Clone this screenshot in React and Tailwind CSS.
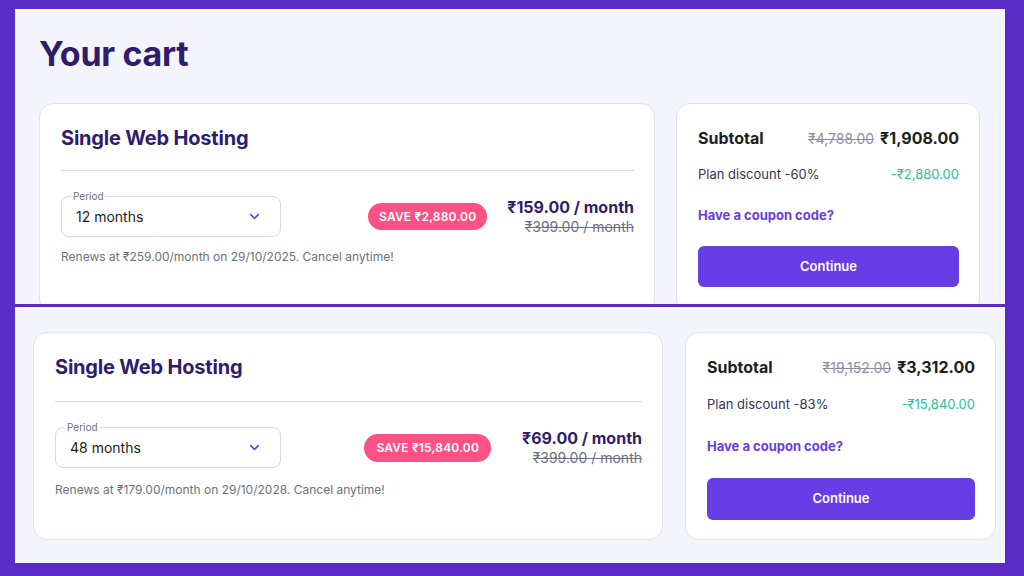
import { ChevronDown } from 'lucide-react';

const font = { fontFamily: 'Inter, "Noto Sans", "DejaVu Sans", sans-serif' };

function PlanCard({ period, renews, save, price, oldPrice, cardClass, selectClass, gapClass, divClass, rowClass, noteClass, badgeClass }) {
  return (
    <div className={`bg-white rounded-[14px] border border-[#e3e3ee] pl-[21px] pr-[20px] pt-[20px] ${cardClass}`}>
      <h2 className="text-[20px] leading-[28px] font-bold text-[#2f1c6a] tracking-[-0.2px]">Single Web Hosting</h2>
      <div className={`h-px bg-[#dcdce6] ${divClass}`} />
      <div className={`flex items-center ${rowClass}`}>
        <div className={`relative h-[41px] border border-[#d8d8e2] rounded-[8px] flex items-center justify-between pl-[14px] pr-[18px] ${selectClass}`}>
          <span className="absolute -top-[7px] left-[9px] bg-white px-[2px] text-[10px] leading-[12px] text-[#6d7081]">Period</span>
          <span className="text-[14px] text-[#1d1e20]">{period}</span>
          <ChevronDown size={15} strokeWidth={2.5} className="text-[#673de6]" />
        </div>
        <div className="flex-1" />
        <div className={`flex items-center ${gapClass}`}>
          <span className={`bg-[#fc5185] text-white text-[12px] font-semibold rounded-full flex items-center tracking-[0.2px] ${badgeClass}`}>
            SAVE {save}
          </span>
          <div className="text-right">
            <div className="text-[16px] leading-[20px] font-bold text-[#2f1c6a]">{price} / month</div>
            <div className="text-[14px] leading-[20px] text-[#6d7081] line-through">{oldPrice} / month</div>
          </div>
        </div>
      </div>
      <p className={`text-[12px] leading-[16px] text-[#6d7081] ${noteClass}`}>{renews}</p>
    </div>
  );
}

function SummaryCard({ oldTotal, total, pct, discount, cardClass, btnClass, discClass, couponClass }) {
  return (
    <div className={`bg-white rounded-[14px] border border-[#e3e3ee] pl-[21px] pr-[20px] pt-[22px] ${cardClass}`}>
      <div className="flex items-center justify-between h-[24px]">
        <span className="text-[16px] font-bold text-[#1d1e20]">Subtotal</span>
        <span className="flex items-baseline gap-[6px]">
          <span className="text-[14px] text-[#8c8fa3] line-through">{oldTotal}</span>
          <span className="text-[16px] font-bold text-[#1d1e20]">{total}</span>
        </span>
      </div>
      <div className={`flex items-center justify-between h-[20px] text-[13px] ${discClass}`}>
        <span className="text-[#36344d]">Plan discount -{pct}%</span>
        <span className="text-[#2bbf9c]">-{discount}</span>
      </div>
      <div className={`h-[20px] flex items-center text-[13px] font-bold text-[#673de6] ${couponClass}`}>Have a coupon code?</div>
      <button className={`w-full bg-[#673de6] rounded-[6px] text-white text-[13px] font-semibold ${btnClass}`}>
        Continue
      </button>
    </div>
  );
}

export default function App() {
  return (
    <div className="w-[1024px] h-[576px] bg-[#5c2bc7] pt-[9px] pl-[15px] overflow-hidden" style={font}>
      <div className="w-[990px] flex flex-col gap-[3px]">
        {/* first screenshot */}
        <div className="h-[295px] bg-[#f4f4fd] overflow-hidden pl-[24px] pr-[25px] pt-[28px]">
          <h1 className="text-[34px] leading-[34px] font-bold text-[#2f1c6a] tracking-[-0.3px]">Your cart</h1>
          <div className="flex gap-[21px] mt-[32px]">
            <PlanCard
              period="12 months"
              renews="Renews at ₹259.00/month on 29/10/2025. Cancel anytime!"
              save="₹2,880.00"
              price="₹159.00"
              oldPrice="₹399.00"
              cardClass="w-[616px] h-[210px]"
              selectClass="w-[220px]"
              gapClass="gap-[20px]"
              divClass="mt-[18px]"
              rowClass="mt-[25px]"
              noteClass="mt-[12px]"
              badgeClass="h-[27px] px-[11px]"
            />
            <SummaryCard
              oldTotal="₹4,788.00"
              total="₹1,908.00"
              pct="60"
              discount="₹2,880.00"
              cardClass="w-[304px] h-[210px]"
              btnClass="h-[41px] mt-[20px]"
              discClass="mt-[15px]"
              couponClass="mt-[21px]"
            />
          </div>
        </div>
        {/* second screenshot */}
        <div className="h-[256px] bg-[#f4f4fd] overflow-hidden pl-[18px] pt-[25px]">
          <div className="flex gap-[22px]">
            <PlanCard
              period="48 months"
              renews="Renews at ₹179.00/month on 29/10/2028. Cancel anytime!"
              save="₹15,840.00"
              price="₹69.00"
              oldPrice="₹399.00"
              cardClass="w-[630px] h-[208px]"
              selectClass="w-[226px]"
              gapClass="gap-[31px]"
              divClass="mt-[20px]"
              rowClass="mt-[25px]"
              noteClass="mt-[14px]"
              badgeClass="h-[28px] px-[12px]"
            />
            <SummaryCard
              oldTotal="₹19,152.00"
              total="₹3,312.00"
              pct="83"
              discount="₹15,840.00"
              cardClass="w-[311px] h-[208px]"
              btnClass="h-[42px] mt-[21px]"
              discClass="mt-[16px]"
              couponClass="mt-[22px]"
            />
          </div>
        </div>
      </div>
    </div>
  );
}
